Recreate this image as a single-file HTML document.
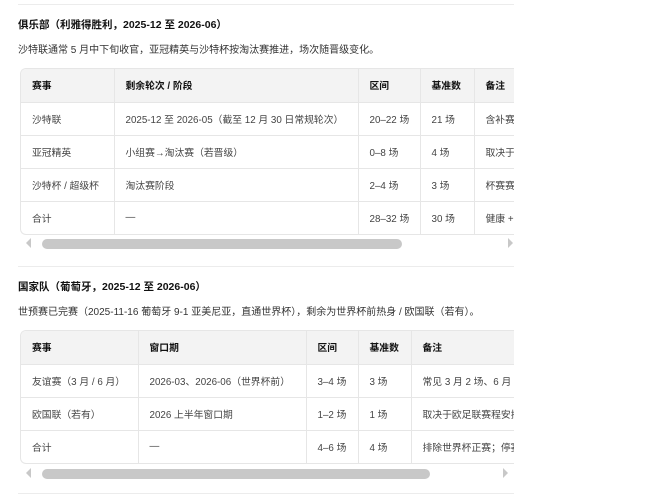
<!DOCTYPE html>
<html><head><meta charset="utf-8"><style>
*{margin:0;padding:0;box-sizing:border-box}
body{width:659px;height:498px;background:#fff;font-family:"Liberation Sans","Noto Sans CJK SC",sans-serif;color:#222;position:relative;overflow:hidden;font-size:10px}
.hr{position:absolute;left:18px;width:496px;height:1px;background:#ececec}
.h{position:absolute;left:18px;font-weight:bold;font-size:10.5px;color:#111}
.p{position:absolute;left:18px;font-size:10px;color:#333;white-space:nowrap}
.tw{position:absolute;left:20px;width:494px;overflow:hidden;border:1px solid #e6e6e6;border-right:none;border-radius:6px 0 0 6px}
table{border-collapse:collapse;table-layout:fixed;font-size:9.8px;color:#444}
td,th{height:33px;border-right:1px solid #e6e6e6;border-bottom:1px solid #e6e6e6;padding-left:11px;text-align:left;white-space:nowrap;overflow:hidden}
th{background:#f3f3f3;font-weight:bold;color:#111}
tr:last-child td{border-bottom:none}
.sb{position:absolute;height:10px;background:#c8c8c8;border-radius:5px}
.al,.ar{position:absolute;width:0;height:0;border-top:5px solid transparent;border-bottom:5px solid transparent}
.al{border-right:5px solid #c8c8c8}.ar{border-left:5px solid #c8c8c8}
</style></head><body>
<div class="hr" style="top:4px"></div>
<div class="h" style="top:17px">俱乐部（利雅得胜利，2025-12 至 2026-06）</div>
<div class="p" style="top:41px">沙特联通常 5 月中下旬收官，亚冠精英与沙特杯按淘汰赛推进，场次随晋级变化。</div>
<div class="tw" style="top:68px;height:167px">
<table style="width:560px"><colgroup><col style="width:93px"><col style="width:244px"><col style="width:62px"><col style="width:54px"><col style="width:107px"></colgroup>
<tr><th>赛事</th><th>剩余轮次 / 阶段</th><th>区间</th><th>基准数</th><th>备注</th></tr>
<tr><td>沙特联</td><td>2025-12 至 2026-05（截至 12 月 30 日常规轮次）</td><td>20–22 场</td><td>21 场</td><td>含补赛</td></tr>
<tr><td>亚冠精英</td><td>小组赛→淘汰赛（若晋级）</td><td>0–8 场</td><td>4 场</td><td>取决于</td></tr>
<tr><td>沙特杯 / 超级杯</td><td>淘汰赛阶段</td><td>2–4 场</td><td>3 场</td><td>杯赛赛</td></tr>
<tr><td>合计</td><td>—</td><td>28–32 场</td><td>30 场</td><td>健康 +</td></tr>
</table></div>
<div class="al" style="left:26px;top:238px"></div>
<div class="sb" style="left:42px;top:239px;width:360px"></div>
<div class="ar" style="left:508px;top:238px"></div>
<div class="hr" style="top:266px"></div>
<div class="h" style="top:279px">国家队（葡萄牙，2025-12 至 2026-06）</div>
<div class="p" style="top:303px">世预赛已完赛（2025-11-16 葡萄牙 9-1 亚美尼亚，直通世界杯），剩余为世界杯前热身 / 欧国联（若有）。</div>
<div class="tw" style="top:330px;height:134px">
<table style="width:580px"><colgroup><col style="width:117px"><col style="width:168px"><col style="width:52px"><col style="width:53px"><col style="width:190px"></colgroup>
<tr><th>赛事</th><th>窗口期</th><th>区间</th><th>基准数</th><th>备注</th></tr>
<tr><td>友谊赛（3 月 / 6 月）</td><td>2026-03、2026-06（世界杯前）</td><td>3–4 场</td><td>3 场</td><td>常见 3 月 2 场、6 月</td></tr>
<tr><td>欧国联（若有）</td><td>2026 上半年窗口期</td><td>1–2 场</td><td>1 场</td><td>取决于欧足联赛程安排</td></tr>
<tr><td>合计</td><td>—</td><td>4–6 场</td><td>4 场</td><td>排除世界杯正赛；停赛</td></tr>
</table></div>
<div class="al" style="left:26px;top:468px"></div>
<div class="sb" style="left:42px;top:469px;width:388px"></div>
<div class="ar" style="left:503px;top:468px"></div>
<div class="hr" style="top:493px"></div>
</body></html>
